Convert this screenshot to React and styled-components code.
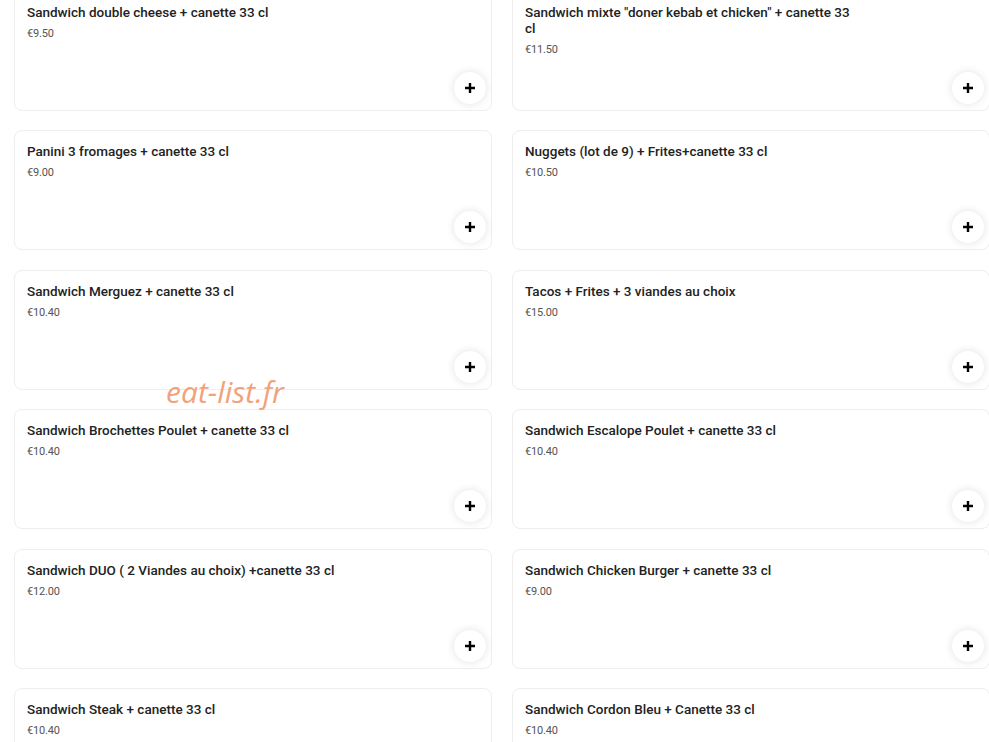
import styled, { createGlobalStyle } from "styled-components"

const items = [
  { name: "Sandwich double cheese + canette 33 cl", price: "€9.50" },
  { name: 'Sandwich mixte "doner kebab et chicken" + canette 33 cl', price: "€11.50" },
  { name: "Panini 3 fromages + canette 33 cl", price: "€9.00" },
  { name: "Nuggets (lot de 9) + Frites+canette 33 cl", price: "€10.50" },
  { name: "Sandwich Merguez + canette 33 cl", price: "€10.40" },
  { name: "Tacos + Frites + 3 viandes au choix", price: "€15.00" },
  { name: "Sandwich Brochettes Poulet +  canette 33 cl", price: "€10.40" },
  { name: "Sandwich Escalope Poulet + canette 33 cl", price: "€10.40" },
  { name: "Sandwich DUO ( 2 Viandes au choix) +canette 33 cl", price: "€12.00" },
  { name: "Sandwich Chicken Burger + canette 33 cl", price: "€9.00" },
  { name: "Sandwich Steak + canette 33 cl", price: "€10.40" },
  { name: "Sandwich Cordon Bleu + Canette 33 cl", price: "€10.40" },
]

const GlobalStyle = createGlobalStyle`
  body {
    margin: 0;
    background: #fff;
    overflow: hidden;
    font-family: Roboto, "Liberation Sans", sans-serif;
  }
`

const PlusIcon = () => (
  <svg width="12" height="12" viewBox="0 0 12 12">
    <path d="M6 1v10M1 6h10" stroke="#000" strokeWidth="2.4" />
  </svg>
)

const App = () => {
  return (
    <>
      <GlobalStyle />
      <Wrapper>
        <Grid>
          {items.map((item) => (
            <Card key={item.name}>
              <Info>
                <Title>{item.name}</Title>
                <Price>{item.price}</Price>
              </Info>
              <AddButton type="button" aria-label="Ajouter">
                <PlusIcon />
              </AddButton>
            </Card>
          ))}
        </Grid>
        <Watermark>eat-list.fr</Watermark>
      </Wrapper>
    </>
  )
}

const Wrapper = styled.div`
  position: relative;
  width: 989px;
  height: 742px;
  overflow: hidden;
`

const Grid = styled.div`
  display: grid;
  grid-template-columns: 478px 478px;
  column-gap: 20px;
  row-gap: 19.5px;
  padding-left: 14px;
  margin-top: -9.5px;
`

const Card = styled.div`
  height: 120px;
  box-sizing: border-box;
  border: 1px solid #eeeeee;
  border-radius: 8px;
  padding: 12px 5px 6px 12px;
  display: flex;
  flex-direction: column;
`

const Info = styled.div`
  max-width: 334px;
`

const Title = styled.div`
  font-size: 13.5px;
  line-height: 16px;
  font-weight: 500;
  color: #222;
`

const Price = styled.div`
  margin-top: 7px;
  font-size: 11px;
  line-height: 14px;
  letter-spacing: -0.2px;
  color: #545454;
`

const AddButton = styled.button`
  margin-top: auto;
  align-self: flex-end;
  width: 32px;
  height: 32px;
  border: none;
  border-radius: 50%;
  background: #fff;
  box-shadow: 0 0 8px rgba(0, 0, 0, 0.12);
  display: flex;
  align-items: center;
  justify-content: center;
  padding: 0;
  cursor: pointer;
`

const Watermark = styled.div`
  position: absolute;
  left: 166px;
  top: 371px;
  font-family: "Open Sans", sans-serif;
  font-style: italic;
  font-size: 30px;
  color: #f2a27a;
`

export default App
